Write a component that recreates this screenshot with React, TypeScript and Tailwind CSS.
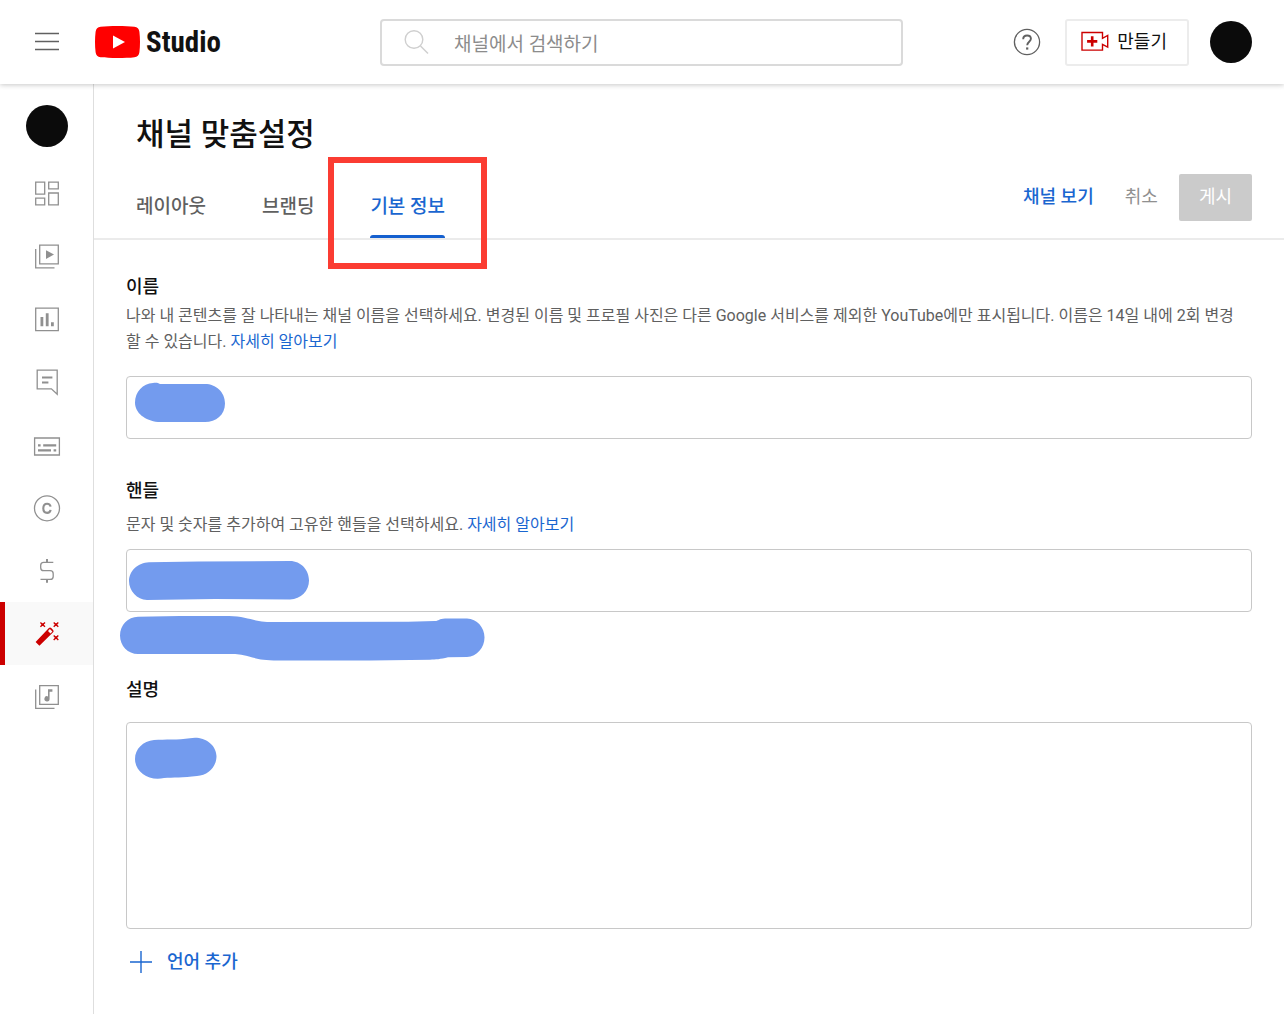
import type { ReactNode } from 'react';

const INK = '#739bee';

function Icon({ children, className }: { children: ReactNode; className?: string }) {
  return (
    <svg
      viewBox="0 0 28 28"
      className={className ?? 'size-7 text-[#909090]'}
      fill="none"
      stroke="currentColor"
      strokeWidth="1.3"
      aria-hidden="true"
    >
      {children}
    </svg>
  );
}

const navItems: { label: string; active?: boolean; icon: ReactNode }[] = [
  {
    label: '대시보드',
    icon: (
      <Icon>
        <path d="M2.7 3.2h9v12h-9zM15.7 3.2h9.6v6.6h-9.6zM2.7 19.2h9v6.6h-9zM15.7 14h9.6v11.8h-9.6z" />
      </Icon>
    ),
  },
  {
    label: '콘텐츠',
    icon: (
      <Icon>
        <path d="M6.7 3.2h18.6v18.6H6.7zM2.7 7v18.8h18.8" />
        <path d="M13 8.200v8.800l8-4.400z" fill="currentColor" stroke="none" />
      </Icon>
    ),
  },
  {
    label: '분석',
    icon: (
      <Icon>
        <path d="M2.7 3.2h22.6v22.4H2.7z" />
        <path d="M7.5 12h2.8v9.300H7.500zM12.800 8.200h2.800v13.100h-2.800zM18 17.300h2.800v4H18z" fill="currentColor" stroke="none" />
      </Icon>
    ),
  },
  {
    label: '댓글',
    icon: (
      <Icon>
        <path d="M4.200 2.200h20v24l-5.800-5.400H4.200z" />
        <path d="M9 9.500h10.400M9 14.500h6.400" strokeWidth="2.200" />
      </Icon>
    ),
  },
  {
    label: '자막',
    icon: (
      <Icon>
        <path d="M1.600 7h24.800v17H1.600z" />
        <path d="M5 14.400h2.600M10.200 14.400h13M5 19.400h13M20.600 19.400h2.600" strokeWidth="2.400" />
      </Icon>
    ),
  },
  {
    label: '저작권',
    icon: (
      <Icon>
        <circle cx="14" cy="14.300" r="12.500" />
        <path d="M17.600 12.700c-.3-1.800-1.500-3-3.500-3-2.400 0-3.800 1.700-3.800 4.600s1.400 4.600 3.800 4.600c2 0 3.200-1.200 3.500-3" strokeWidth="2.100" />
      </Icon>
    ),
  },
  {
    label: '수익 창출',
    icon: (
      <Icon>
        <path d="M20.300 5.300h-9.600a3 3 0 0 0-3 3v2.400a3 3 0 0 0 3 3h6.500a3 3 0 0 1 3 3v2.700a3 3 0 0 1-3 3H7.500" />
        <path d="M14 2v3.300M14 22.400v3.400" strokeWidth="2" />
      </Icon>
    ),
  },
  {
    label: '맞춤설정',
    active: true,
    icon: (
      <Icon className="size-7 text-[#cc0000]">
        <path d="M2.600 22 15.900 8.100a1.600 1.600 0 0 1 2.300 0l1.900 1.900a1.600 1.600 0 0 1 0 2.300L6.400 25.800z" fill="currentColor" stroke="none" />
        <path d="m16.900 8.900 2.500 2.500-1.900 2-2.500-2.500z" fill="#f9f9f9" stroke="none" />
        <path
          d="m7.400 2.400 4.600 4.400m0-4.400L7.400 6.800M20.700 2.400l4.600 4.400m0-4.400-4.600 4.400M20.700 15.600l4.600 4.400m0-4.400L20.700 20"
          strokeWidth="1.400"
        />
        <path d="M8.500 3.400h2.400v2.400H8.500zM21.800 3.400h2.400v2.400h-2.400zM21.800 16.600h2.400V19h-2.400z" fill="currentColor" stroke="none" />
      </Icon>
    ),
  },
  {
    label: '오디오 보관함',
    icon: (
      <Icon>
        <path d="M6.700 2.700h18.600v18.600H6.700zM2.700 6.500v18.800h18.800" />
        <path d="M15 6.200h4.400v2.600h-2.800v7a2.600 2.600 0 1 1-1.600-2.400z" fill="currentColor" stroke="none" />
      </Icon>
    ),
  },
];

function Header() {
  return (
    <header className="relative z-10 flex h-[84px] items-center bg-white pr-8 shadow-[0_1px_5px_rgba(0,0,0,0.22)]">
      <div className="flex w-[380px] shrink-0 items-center">
        <button type="button" aria-label="메뉴" className="ml-[35px]">
          <svg viewBox="0 0 24 20" className="h-5 w-6" stroke="#606060" strokeWidth="1.300" aria-hidden="true">
            <path d="M0 1.500h24M0 9.500h24M0 17.500h24" />
          </svg>
        </button>
        <a href="#studio" className="ml-9 flex items-center gap-1.5">
          <svg viewBox="0 0 45 32" className="h-8 w-[45px]" aria-hidden="true">
            <path
              d="M5.600.8C10 .2 16 0 22.500 0s12.500.2 16.900.8c3 .4 4.600 2.200 5 5 .4 3.300.6 6.700.6 10.200s-.2 6.900-.6 10.200c-.4 2.800-2 4.600-5 5-4.400.6-10.400.8-16.900.8s-12.500-.2-16.900-.8c-3-.4-4.600-2.200-5-5C.2 22.900 0 19.500 0 16S.2 9.100.6 5.800c.4-2.800 2-4.600 5-5z"
              fill="#ff0000"
            />
            <path d="M18 9.600v12.800L30 16z" fill="#fff" />
          </svg>
          <span className="font-['Liberation_Sans_Narrow','Roboto_Condensed','Liberation_Sans',sans-serif] text-[29px] leading-8 font-bold text-[#111]">
            Studio
          </span>
        </a>
      </div>
      <label className="flex h-[47px] max-w-[523px] flex-1 items-center rounded border-2 border-[#dadada] px-[22px]">
        <svg viewBox="0 0 26 26" className="size-[26px] shrink-0" fill="none" stroke="#cfcfcf" strokeWidth="1.400" aria-hidden="true">
          <circle cx="10" cy="10.500" r="8.800" />
          <path d="m16.500 17 7.500 7.500" />
        </svg>
        <input
          type="search"
          aria-label="채널에서 검색하기"
          placeholder="채널에서 검색하기"
          className="ml-6 w-full min-w-0 bg-transparent pt-1.5 text-[19px] outline-none placeholder:text-[#8c8c8c] placeholder:opacity-100"
        />
      </label>
      <div className="ml-auto flex items-center">
        <button type="button" aria-label="도움말">
          <svg viewBox="0 0 28 28" className="size-7" fill="none" stroke="#606060" aria-hidden="true">
            <circle cx="14" cy="14" r="12.600" strokeWidth="1.300" />
            <path d="M10.200 11.200c0-2.300 1.600-3.700 3.900-3.700s3.800 1.300 3.800 3.300c0 2.900-3.700 3-3.700 6.400" strokeWidth="1.900" />
            <path d="M13.100 19.400h2.200v2.200h-2.200z" fill="#606060" stroke="none" />
          </svg>
        </button>
        <button
          type="button"
          className="ml-6 flex h-[47px] items-center gap-2 rounded-[3px] border-2 border-[#ececec] pr-5 pb-0.5 pl-3.5 text-[18px] text-[#111]"
        >
          <svg viewBox="0 0 28 20" className="h-5 w-7" fill="none" stroke="#cc0000" strokeWidth="1.400" aria-hidden="true">
            <path d="M1 1.500h20.500v5.800l5.200-2.800v11.600l-5.200-2.800v5.800H1z" />
            <path d="M11.200 5.300v10.200M6.100 10.400h10.200" strokeWidth="2.600" />
          </svg>
          만들기
        </button>
        <span className="ml-[21px] size-[42px] rounded-full bg-[#0b0b0b]" />
      </div>
    </header>
  );
}

function Sidebar() {
  return (
    <nav className="w-[94px] shrink-0 border-r border-[#dedede] pt-[21px]">
      <div className="mx-auto mb-3.5 size-[42px] rounded-full bg-[#0b0b0b]" />
      <ul>
        {navItems.map((item) => (
          <li key={item.label}>
            <a
              href="#nav"
              aria-label={item.label}
              className={
                item.active
                  ? 'flex h-[63px] items-center justify-center border-l-[5px] border-[#cc0000] bg-[#f9f9f9] pr-[5px]'
                  : 'flex h-[63px] items-center justify-center'
              }
            >
              {item.icon}
            </a>
          </li>
        ))}
      </ul>
    </nav>
  );
}

function Tabs() {
  return (
    <div className="flex items-end justify-between border-b-2 border-[#ebebeb] pr-8 pl-[42px]">
      <div role="tablist" className="flex gap-14 text-[19px] font-medium text-[#606060]">
        <button type="button" role="tab" aria-selected="false" className="h-[62px]">
          레이아웃
        </button>
        <button type="button" role="tab" aria-selected="false" className="h-[62px]">
          브랜딩
        </button>
        <button type="button" role="tab" aria-selected="true" className="relative h-[62px] text-[#1a66d0]">
          기본 정보
          <span className="absolute inset-x-0 bottom-0 h-[3px] rounded-t bg-[#1560cf]" />
          <span className="pointer-events-none absolute -inset-x-[42px] -top-[19px] -bottom-[31px] border-6 border-[#fb3c32]" />
        </button>
      </div>
      <div className="mb-[17px] flex items-center text-[18px]">
        <a href="#channel" className="pb-0.5 font-medium text-[#1a66d0]">
          채널 보기
        </a>
        <button type="button" className="ml-[31px] pb-0.5 text-[#909090]">
          취소
        </button>
        <button type="button" className="ml-[21px] h-[47px] rounded-xs bg-[#cbcbcb] px-5 pb-0.5 text-white">
          게시
        </button>
      </div>
    </div>
  );
}

const fieldClass = 'block w-full resize-none rounded border border-[#c8c8c8] bg-white px-3 outline-none';
const linkClass = 'text-[#1a66d0]';

export default function App() {
  return (
    <div className="flex min-h-screen flex-col bg-white font-['Roboto','Noto_Sans_CJK_KR',sans-serif] text-[#111]">
      <Header />
      <div className="flex flex-1">
        <Sidebar />
        <main className="min-w-0 flex-1">
          <h1 className="pt-7 pb-4 pl-[42px] text-[31px] leading-[46px] font-medium">채널 맞춤설정</h1>
          <Tabs />
          <form className="px-8 pt-[34px] pb-6 text-[16px] leading-[26px] text-[#606060]">
            <section>
              <label htmlFor="name" className="block text-[18px] font-medium text-[#111]">
                이름
              </label>
              <p className="mt-[3px] pr-2">
                나와 내 콘텐츠를 잘 나타내는 채널 이름을 선택하세요. 변경된 이름 및 프로필 사진은 다른 Google 서비스를 제외한 YouTube에만 표시됩니다.
                이름은 14일 내에 2회 변경할 수 있습니다.{' '}
                <a href="#name-help" className={linkClass}>
                  자세히 알아보기
                </a>
              </p>
              <div className="relative mt-[21px]">
                <input id="name" type="text" className={`${fieldClass} h-[63px]`} />
                <svg viewBox="0 0 90 40" className="pointer-events-none absolute top-1.5 left-[9px] h-10 w-[90px]" fill={INK} aria-hidden="true">
                  <path d="M18 1c3-.6 5-.2 7 1h45c11 0 20 8 20 19.500S81 40 70 40H23C10 38.500 0 31 0 20.500 0 10 8 1.500 18 1z" />
                </svg>
              </div>
            </section>
            <section className="mt-[39px]">
              <label htmlFor="handle" className="block text-[18px] font-medium text-[#111]">
                핸들
              </label>
              <p className="mt-2">
                문자 및 숫자를 추가하여 고유한 핸들을 선택하세요.{' '}
                <a href="#handle-help" className={linkClass}>
                  자세히 알아보기
                </a>
              </p>
              <div className="relative mt-[11px]">
                <input id="handle" type="text" className={`${fieldClass} h-[63px]`} />
                <svg
                  viewBox="0 0 180 39"
                  className="pointer-events-none absolute top-3 left-[3px] h-[39px] w-[180px]"
                  fill={INK}
                  aria-hidden="true"
                >
                  <path d="M20 1.200 70 .6 161 0c11 0 19 9 19 19.500S172 38 161 38.500l-75-.4-68 .9C8 38.500 0 30 0 20S9 1.500 20 1.200z" />
                </svg>
              </div>
              <svg viewBox="0 0 365 45" className="mt-1 -ml-1.5 h-[45px] w-[365px]" fill={INK} aria-hidden="true">
                <path d="M18 .8 60 0h49c12 0 20 3 27 4.400 8 1.600 14 1.600 22 1.600l130-.2 27-.8c4-.3 4-2.500 10-2.600h22c10 .2 17.500 9 17.500 19S357 40.500 347 41l-19 .3c-8 2-12 2.200-18 2.400l-60 .8h-92c-16-.2-22-2-29-4-8-2-12-2.500-18-2.500H18C8 38 0 30 0 19.500S8 1 18 .8z" />
              </svg>
            </section>
            <section className="mt-4">
              <label htmlFor="description" className="block text-[18px] font-medium text-[#111]">
                설명
              </label>
              <div className="relative mt-[19px]">
                <textarea id="description" className={`${fieldClass} h-[207px]`} />
                <svg
                  viewBox="0 0 82 42"
                  className="pointer-events-none absolute top-[15px] left-[9px] h-[42px] w-[82px]"
                  fill={INK}
                  aria-hidden="true"
                >
                  <path d="M19 3c11-1 24 .2 36-1.800C67-1.500 81 6 81.500 19 81.500 30 73 38.500 62 39c-14 1.600-24 1.500-33 2C14 44.500 0 35 0 22 0 12 8 4 19 3z" />
                </svg>
              </div>
            </section>
            <button type="button" className="mt-5 flex items-center gap-3.5 pl-[3px] text-[18px] font-medium text-[#1a66d0]">
              <svg viewBox="0 0 24 24" className="size-6" stroke="#1a66d0" strokeWidth="1.400" aria-hidden="true">
                <path d="M12 1v22M1 12h22" />
              </svg>
              언어 추가
            </button>
          </form>
        </main>
      </div>
    </div>
  );
}
